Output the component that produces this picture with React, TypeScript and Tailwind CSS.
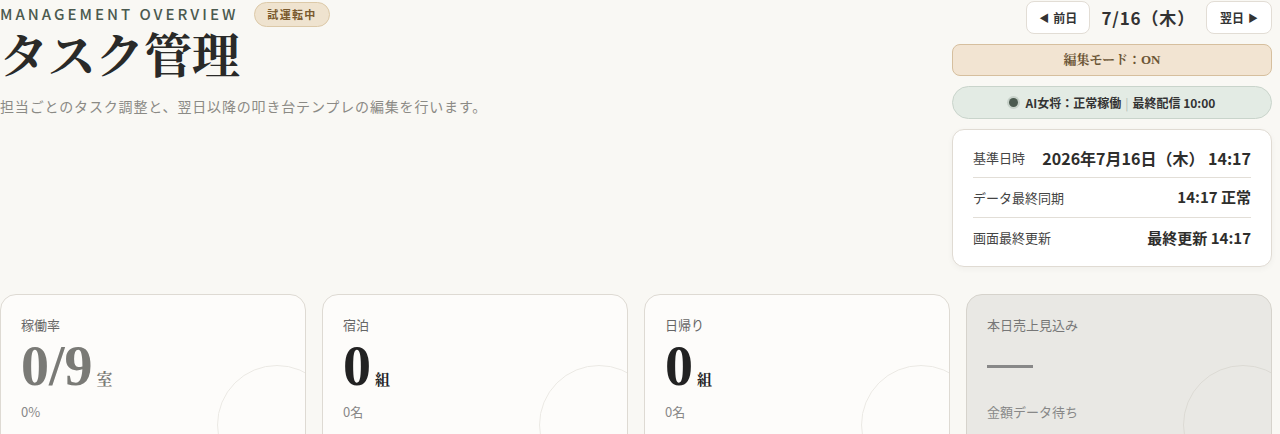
import React from "react";

const sans = "font-['Noto_Sans_CJK_JP','Noto_Sans',sans-serif]";
const serif = "font-['Liberation_Serif','Noto_Serif_CJK_JP','Noto_Sans_CJK_JP',serif]";

function Circle({ gray }: { gray?: boolean }) {
  return (
    <div
      className={
        "pointer-events-none absolute top-[70px] right-[-32px] h-[120px] w-[120px] rounded-full border " +
        (gray ? "border-[#dcdad4]" : "border-[#ebe9e4]")
      }
    />
  );
}

export default function App() {
  return (
    <div className={`min-h-screen bg-[#f9f8f4] pr-2 ${sans}`}>
      <div className="flex justify-between">
        <div>
          <div className="flex h-[27px] items-center gap-4 mt-px">
            <span className="text-[15px] font-medium tracking-[0.2em] text-[#4b5a4f]">MANAGEMENT OVERVIEW</span>
            <span className="flex h-[25px] items-center rounded-full border border-[#dcc9a8] bg-[#efe3cf] px-3 text-[11px] font-bold tracking-[0.12em] text-[#7a5a2e]">
              試運転中
            </span>
          </div>
          <h1 className={`mt-[5px] text-[48px] font-bold leading-none text-[#2a2a28] ${serif}`}>タスク管理</h1>
          <p className="mt-[15px] text-sm leading-5 tracking-[0.06em] text-[#8b8a85]">
            担当ごとのタスク調整と、翌日以降の叩き台テンプレの編集を行います。
          </p>
        </div>
        <div className="mt-px flex w-[320px] flex-col gap-[10px]">
          <div className="flex items-center justify-end">
            <button className="flex h-[33px] w-[64px] items-center justify-center gap-1 rounded-lg border border-[#e2ddd5] bg-white text-[12px] font-bold text-[#333]">
              <span className="text-[10px]">◀</span>前日
            </button>
            <span className="mx-[11px] text-[17px] font-bold tracking-[0.05em] text-[#333]">7/16（木）</span>
            <button className="flex h-[33px] w-[66px] items-center justify-center gap-1 rounded-lg border border-[#e2ddd5] bg-white text-[12px] font-bold text-[#333]">
              翌日<span className="text-[10px]">▶</span>
            </button>
          </div>
          <div className={`flex h-[32px] items-center justify-center rounded-lg border border-[#d6bf9e] bg-[#f2e4d2] text-[13px] font-bold text-[#6b5535] ${serif}`}>
            編集モード：ON
          </div>
          <div className="flex h-[33px] items-center justify-center gap-2 rounded-full border border-[#c9d4cb] bg-[#e3ebe4] text-[12px] font-bold text-[#333]">
            <span className="h-[9px] w-[9px] rounded-full bg-[#4b5a4f] ring-2 ring-[#c8d2ca]" />
            <span>
              AI女将：正常稼働<span className="mx-1 font-normal text-[#b5bcb6]">|</span>最終配信 10:00
            </span>
          </div>
          <div className="rounded-xl border border-[#e0dbd3] bg-white px-5 py-2 shadow-[0_2px_6px_rgba(0,0,0,0.04)]">
            <div className="flex h-[40px] items-center justify-between border-b border-[#e2ded7]">
              <span className="text-[13px] text-[#444]">基準日時</span>
              <span className="text-[16px] font-bold text-[#2e2e2c]">2026年7月16日（木） 14:17</span>
            </div>
            <div className="flex h-[40px] items-center justify-between border-b border-[#e2ded7]">
              <span className="text-[13px] text-[#444]">データ最終同期</span>
              <span className="text-[15px] font-bold text-[#2e2e2c]">14:17 正常</span>
            </div>
            <div className="flex h-[40px] items-center justify-between">
              <span className="text-[13px] text-[#444]">画面最終更新</span>
              <span className="text-[15px] font-bold text-[#2e2e2c]">最終更新 14:17</span>
            </div>
          </div>
        </div>
      </div>

      <div className="mt-[27px] grid grid-cols-4 gap-4">
        <div className="relative h-[170px] overflow-hidden rounded-2xl border border-[#dedad3] bg-[#fdfcfa] px-5 pt-[20px]">
          <div className="text-[13px] leading-5 text-[#666]">稼働率</div>
          <div className={`mt-[3px] flex items-baseline ${serif}`}>
            <span className="text-[56px] font-bold leading-[56px] text-[#7a7a76]">0/9</span>
            <span className="ml-1 text-[16px] font-bold text-[#7a7a76]">室</span>
          </div>
          <div className="mt-[8px] text-[13px] leading-5 text-[#888]">0%</div>
          <Circle />
        </div>
        <div className="relative h-[170px] overflow-hidden rounded-2xl border border-[#dedad3] bg-[#fdfcfa] px-5 pt-[20px]">
          <div className="text-[13px] leading-5 text-[#666]">宿泊</div>
          <div className={`mt-[3px] flex items-baseline ${serif}`}>
            <span className="text-[56px] font-bold leading-[56px] text-[#222]">0</span>
            <span className="ml-1 text-[15px] font-bold text-[#222]">組</span>
          </div>
          <div className="mt-[8px] text-[13px] leading-5 text-[#888]">0名</div>
          <Circle />
        </div>
        <div className="relative h-[170px] overflow-hidden rounded-2xl border border-[#dedad3] bg-[#fdfcfa] px-5 pt-[20px]">
          <div className="text-[13px] leading-5 text-[#666]">日帰り</div>
          <div className={`mt-[3px] flex items-baseline ${serif}`}>
            <span className="text-[56px] font-bold leading-[56px] text-[#222]">0</span>
            <span className="ml-1 text-[15px] font-bold text-[#222]">組</span>
          </div>
          <div className="mt-[8px] text-[13px] leading-5 text-[#888]">0名</div>
          <Circle />
        </div>
        <div className="relative h-[170px] overflow-hidden rounded-2xl border border-[#d6d3cc] bg-[#e9e8e4] px-5 pt-[20px]">
          <div className="text-[13px] leading-5 text-[#777]">本日売上見込み</div>
          <div className="mt-[3px] flex h-[56px] items-center">
            <div className="h-[3px] w-[46px] bg-[#888]" />
          </div>
          <div className="mt-[8px] text-[13px] leading-5 text-[#888]">金額データ待ち</div>
          <Circle gray />
        </div>
      </div>
    </div>
  );
}
